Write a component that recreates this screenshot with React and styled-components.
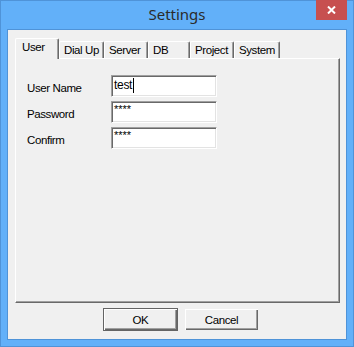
import React from 'react';
import styled, { createGlobalStyle } from 'styled-components';

const GlobalStyle = createGlobalStyle`
  html, body {
    margin: 0;
    padding: 0;
    background: #ffffff;
  }
`;

const tabs = [
    { label: 'User', width: 44 },
    { label: 'Dial Up', width: 45 },
    { label: 'Server', width: 44 },
    { label: 'DB', width: 42 },
    { label: 'Project', width: 44 },
    { label: 'System', width: 46 }
];

const fields = [
    { label: 'User Name', value: 'test', caret: true },
    { label: 'Password', value: '****', secret: true },
    { label: 'Confirm', value: '****', secret: true }
];

const CloseIcon = () => (
    <svg width="9" height="8" viewBox="0 0 9 8">
        <path d="M1 0.5 L8 7.5 M8 0.5 L1 7.5" stroke="#ffffff" strokeWidth="2" />
    </svg>
);

const App = () => (
    <React.Fragment>
        <GlobalStyle />
        <Window>
            <TitleBar>
                <span />
                <Title>Settings</Title>
                <CloseButton><CloseIcon /></CloseButton>
            </TitleBar>
            <Client>
                <TabStrip>
                    {tabs.map((tab, index) => (
                        <Tab key={tab.label} $active={index === 0} $width={tab.width}>{tab.label}</Tab>
                    ))}
                </TabStrip>
                <Panel>
                    <Form>
                        {fields.map(field => (
                            <FieldRow key={field.label}>
                                <FieldLabel>{field.label}</FieldLabel>
                                <EditBox $secret={field.secret}>
                                    {field.value}
                                    {field.caret && <Caret />}
                                </EditBox>
                            </FieldRow>
                        ))}
                    </Form>
                </Panel>
                <ButtonRow>
                    <PushButton $default>OK</PushButton>
                    <PushButton>Cancel</PushButton>
                </ButtonRow>
            </Client>
        </Window>
    </React.Fragment>
);

const Window = styled.div`
  width: 354px;
  height: 347px;
  box-sizing: border-box;
  border: 1px solid #4f93d8;
  background: #62b0f9;
  display: flex;
  flex-direction: column;
  font-family: "Liberation Sans", Arial, sans-serif;
  font-size: 11.5px;
  letter-spacing: -0.4px;
  color: #000000;
`;

const TitleBar = styled.div`
  height: 28px;
  display: grid;
  grid-template-columns: 1fr auto 1fr;
  align-items: start;
`;

const Title = styled.div`
  font-family: "Noto Sans", "Open Sans", sans-serif;
  font-size: 15px;
  letter-spacing: 0;
  color: #2b2b2b;
  line-height: 28px;
  margin-top: -1px;
`;

const CloseButton = styled.div`
  justify-self: end;
  width: 31px;
  height: 20px;
  margin-top: -1px;
  margin-right: 6px;
  background: #c75050;
  display: flex;
  align-items: center;
  justify-content: center;
`;

const Client = styled.div`
  flex: 1;
  margin: 0 6px 6px;
  border: 1px solid #4f93d8;
  background: #f0f0f0;
  padding: 8px 6px 0 7px;
  display: flex;
  flex-direction: column;
`;

const TabStrip = styled.div`
  display: flex;
  align-items: flex-end;
  height: 20px;
`;

const Tab = styled.div`
  box-sizing: border-box;
  width: ${props => props.$width}px;
  height: ${props => props.$active ? 21 : 17}px;
  padding: ${props => props.$active ? '2px 0 0 6px' : '2px 0 0 4px'};
  margin-bottom: ${props => props.$active ? '-1px' : '0'};
  position: relative;
  z-index: ${props => props.$active ? 1 : 0};
  background: #f0f0f0;
  border-top: 1px solid #ffffff;
  border-left: 1px solid #ffffff;
  border-right: 1px solid #696969;
  box-shadow: inset -1px 0 #a0a0a0;
  border-top-left-radius: 2px;
  border-top-right-radius: 2px;
  white-space: nowrap;
`;

const Panel = styled.div`
  box-sizing: border-box;
  width: 325px;
  height: 245px;
  border-top: 1px solid #ffffff;
  border-left: 1px solid #ffffff;
  border-right: 1px solid #696969;
  border-bottom: 1px solid #696969;
  box-shadow: inset -1px -1px #a0a0a0;
  padding: 16px 0 0 11px;
`;

const Form = styled.div`
  display: flex;
  flex-direction: column;
  gap: 4px;
`;

const FieldRow = styled.div`
  display: flex;
  align-items: center;
`;

const FieldLabel = styled.div`
  width: 84px;
  padding-top: 3px;
`;

const EditBox = styled.div`
  box-sizing: border-box;
  width: 106px;
  height: 22px;
  background: #ffffff;
  border-top: 1px solid #a0a0a0;
  border-left: 1px solid #a0a0a0;
  border-right: 1px solid #ffffff;
  border-bottom: 1px solid #ffffff;
  box-shadow: inset 1px 1px #696969, inset -1px -1px #e3e3e3;
  padding: ${props => props.$secret ? '2px 0 0 2px' : '2px 0 0 2px'};
  font-size: ${props => props.$secret ? '11px' : '12px'};
  line-height: ${props => props.$secret ? '11px' : '15px'};
  letter-spacing: ${props => props.$secret ? '0' : '-0.3px'};
  display: flex;
  align-items: flex-start;
`;

const Caret = styled.span`
  width: 1px;
  height: 15px;
  margin-left: 1px;
  background: #000000;
`;

const ButtonRow = styled.div`
  display: flex;
  gap: 6px;
  margin-top: 5px;
  padding-left: 88px;
`;

const PushButton = styled.div`
  box-sizing: border-box;
  width: 75px;
  height: 23px;
  display: flex;
  align-items: center;
  justify-content: center;
  background: #f0f0f0;
  border: 1px solid ${props => props.$default ? '#646464' : '#f0f0f0'};
  box-shadow: inset 1px 1px #ffffff, inset -1px -1px #696969, inset -2px -2px #a0a0a0;
`;

export default App;
